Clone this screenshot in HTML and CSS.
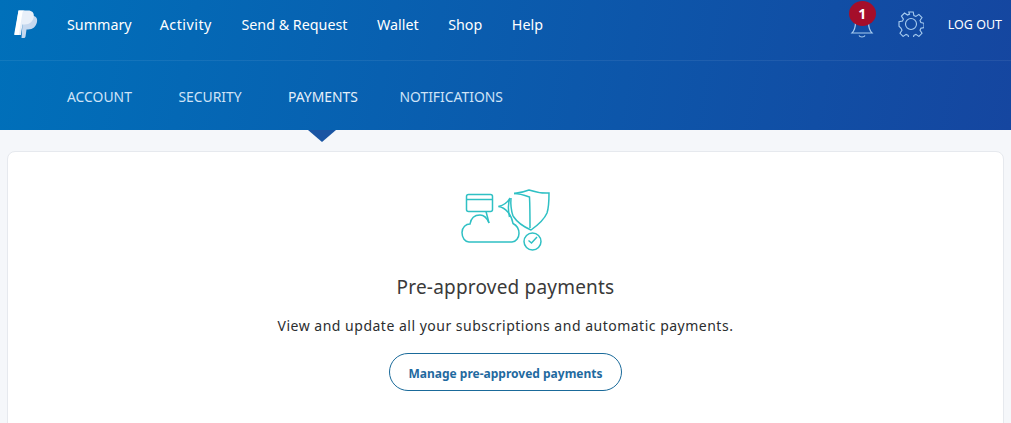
FILE: index.html
```html
<!DOCTYPE html>
<html lang="en">
<head>
<meta charset="utf-8">
<title>Pre-approved payments</title>
<link rel="stylesheet" href="styles.css">
</head>
<body>
<header class="hero">
  <div class="topbar">
    <svg class="logo" viewBox="0 0 24 28" aria-hidden="true">
      <path class="logo-back" d="M9 6h11c3 1 3.500 3.500 3 6-.9 4.500-4 7.500-9 7.500h-1.500l-1 7c-.2 1-1 1.500-2 1.500H7.500z"/>
      <path class="logo-mid" d="M4.500.5H14c4 0 6.300 2.200 5.800 6-.6 5-4.300 8-9 8H8.500l-1.600 10.500H.8z"/>
      <path class="logo-front" d="M4.500.5H11c-1.500 0-2.300.7-2.500 2L5.800 18.500 4.900 25H.8c-.4 0-.7-.3-.6-.8z"/>
    </svg>
    <nav class="mainnav">
      <a class="summary">Summary</a><a class="activity">Activity</a><a>Send &amp; Request</a><a>Wallet</a><a>Shop</a><a>Help</a>
    </nav>
    <div class="tools">
      <div class="bell">
        <svg class="bell-icon" viewBox="0 0 24 34" aria-hidden="true">
          <path d="M2 29c3-3 3.500-6 3.500-11 0-5 3-9 6.500-9s6.500 4 6.500 9c0 5 .5 8 3.500 11z"/>
          <path d="M9 31.500c1 2 5 2 6 0"/>
        </svg>
        <span class="badge">1</span>
      </div>
      <svg class="gear" viewBox="0 0 26 26" aria-hidden="true">
        <path d="M10.800 1h4.400l.7 3.500 2 .9 3-2 3.100 3.100-2 3 .9 2 3.100.7v4.400l-3.100.7-.9 2 2 3-3.100 3.100-3-2-2 .9-.7 3.100h-4.400l-.7-3.100-2-.9-3 2-3.100-3.100 2-3-.9-2L1 15.200v-4.400l3.500-.7.9-2-2-3 3.100-3.100 3 2 2-.9z"/>
        <circle cx="13" cy="13" r="5.500"/>
      </svg>
      <a class="logout">LOG OUT</a>
    </div>
  </div>
  <nav class="subnav">
    <a>ACCOUNT</a><a>SECURITY</a><a class="active">PAYMENTS</a><a>NOTIFICATIONS</a>
  </nav>
</header>
<main class="card">
  <svg class="illustration" viewBox="0 0 110 80" aria-hidden="true">
    <rect x="15.500" y="14.500" width="26" height="17" rx="2"/>
    <path d="M15.500 19.500h26"/>
    <path d="M35 31.500l3 11.500"/>
    <path d="M18 62c-4 0-7-4-7-9.500s4-8.500 8-8.500c1-6 5-9 10-9 4 0 7 3 9 8"/>
    <path d="M47.500 26.500c4-1 9-4 11.500-8.500-2 5-2 12-.5 19"/>
    <path d="M47.500 26.500c7 1 13 8 14.500 17 4 2 6 6 6 10 0 4-3 8.500-7 8.500H18"/>
    <path d="M63 13.500c5-.5 10-1.500 15-3.500 6 2 13 3.500 20 3 0 7 0 14-2 20-3 7-9 12-16 17-7-3-14-8-18-14"/>
    <path d="M60 18c-.5 6 0 12 2 18"/>
    <path d="M63 13.500c5 0 10 1.500 15.500 3.500.5 10 .5 20 .5 31"/>
    <circle cx="81.500" cy="61.500" r="8.500"/>
    <path d="M77.500 60.500l3 2.500 5.500-6"/>
  </svg>
  <h1 class="title">Pre-approved payments</h1>
  <p class="lead">View and update all your subscriptions and automatic payments.</p>
  <a class="button">Manage pre-approved payments</a>
</main>
<span class="pointer"></span>
</body>
</html>
```
FILE: styles.css
```css
* { box-sizing: border-box; }
html, body { margin: 0; height: 100%; overflow: hidden; }
body {
  background: #f5f7fa;
  font-family: "Noto Sans", "Open Sans", sans-serif;
  color: #2c2e2f;
  position: relative;
}
.hero {
  height: 130px;
  background: linear-gradient(100deg, #0070ba 0%, #1546a0 100%);
  display: flex;
  flex-direction: column;
}
.topbar {
  height: 61px;
  flex: none;
  display: flex;
  align-items: flex-start;
  border-bottom: 1px solid rgba(255, 255, 255, .07);
  padding: 10px 9px 0 14px;
}
.logo { width: 24px; height: 28px; flex: none; }
.logo-front { fill: #fff; }
.logo-mid { fill: #e8eff9; }
.logo-back { fill: #c6d8ef; }
.mainnav {
  display: flex;
  gap: 29.500px;
  margin-left: 29px;
  margin-top: 4px;
  font-size: 14.300px;
  line-height: 22px;
  color: #fff;
}
.summary { margin-right: -1.500px; }
.activity { letter-spacing: .5px; }
.tools {
  margin-left: auto;
  display: flex;
  align-items: flex-start;
  margin-top: -10px;
}
.bell { position: relative; width: 24px; height: 40px; margin-right: 24px; }
.bell-icon { width: 24px; height: 34px; margin-top: 4px; display: block; fill: none; stroke: #a8cdf0; stroke-width: 1.200; }
.badge {
  position: absolute;
  left: -1px;
  top: 1px;
  width: 27px;
  height: 25px;
  border-radius: 50%;
  background: #a50e2a;
  color: #fff;
  font-size: 14px;
  font-weight: 700;
  line-height: 25px;
  text-align: center;
}
.gear { width: 26px; height: 26px; margin-top: 11px; margin-right: 24px; fill: none; stroke: #a8cdf0; stroke-width: 1.100; }
.logout { color: #fff; font-size: 12.500px; line-height: 18px; margin-top: 16px; }
.subnav {
  display: flex;
  padding-left: 67px;
  margin-top: 26px;
  gap: 46.500px;
  font-size: 13.900px;
  line-height: 20px;
  color: #cfe3f7;
}
.subnav .active { color: #e4effa; margin-right: -5px; }
.pointer {
  position: absolute;
  left: 308px;
  top: 130px;
  width: 0;
  height: 0;
  border-left: 14.500px solid transparent;
  border-right: 14.500px solid transparent;
  border-top: 12px solid #1a55a3;
}
.card {
  margin: 21px 7px 0 7px;
  height: 400px;
  background: #fff;
  border: 1px solid #e6e9ee;
  border-radius: 8px;
  display: flex;
  flex-direction: column;
  align-items: center;
  padding-top: 28px;
}
.illustration { width: 110px; height: 80px; flex: none; fill: none; stroke: #2fc0c4; stroke-width: 1.500; }
.title {
  margin: 14px 0 0;
  font-size: 19px;
  line-height: 26px;
  font-weight: 400;
  letter-spacing: .2px;
  color: #3a3a3a;
}
.lead {
  margin: 16px 0 0;
  font-size: 14px;
  line-height: 20px;
  letter-spacing: .5px;
  color: #2c2e2f;
}
.button {
  margin-top: 17px;
  height: 38px;
  width: 233px;
  padding-top: 2px;
  border: 1px solid #1a6a9a;
  border-radius: 19px;
  display: flex;
  align-items: center;
  justify-content: center;
  font-size: 12px;
  font-weight: 700;
  color: #1f6aa0;
}
```
